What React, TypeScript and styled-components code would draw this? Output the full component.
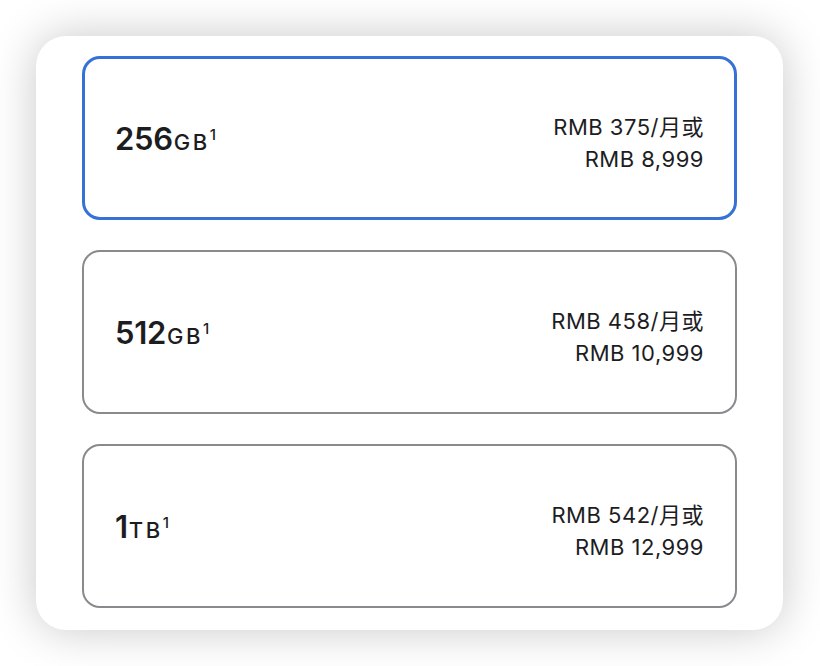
import React, { FC } from 'react';
import styled, { createGlobalStyle } from 'styled-components';

interface StorageOption {
  amount: string;
  unit: string;
  monthly: string;
  total: string;
  selected?: boolean;
}

const options: StorageOption[] = [
  { amount: '256', unit: 'GB', monthly: 'RMB 375/月或', total: 'RMB 8,999', selected: true },
  { amount: '512', unit: 'GB', monthly: 'RMB 458/月或', total: 'RMB 10,999' },
  { amount: '1', unit: 'TB', monthly: 'RMB 542/月或', total: 'RMB 12,999' },
];

const App: FC = () => {
  return (
    <>
      <GlobalStyle />
      <Page>
        <Card>
          {options.map((option) => (
            <OptionBox key={option.amount} $selected={!!option.selected}>
              <Capacity>
                {option.amount}
                <Unit>{option.unit}</Unit>
                <Footnote>1</Footnote>
              </Capacity>
              <Price>
                <PriceLine>{option.monthly}</PriceLine>
                <PriceLine>{option.total}</PriceLine>
              </Price>
            </OptionBox>
          ))}
        </Card>
      </Page>
    </>
  );
};

export default App;

const GlobalStyle = createGlobalStyle`
  html, body {
    margin: 0;
    padding: 0;
    background-color: #ffffff;
  }
  body {
    font-family: 'Inter', 'Noto Sans CJK SC', sans-serif;
    color: #1d1d1f;
    -webkit-font-smoothing: antialiased;
  }
`;

const Page = styled.div`
  width: 820px;
  height: 666px;
  padding: 36px 37px 36px 36px;
  box-sizing: border-box;
  overflow: hidden;
`;

const Card = styled.div`
  width: 747px;
  height: 594px;
  box-sizing: border-box;
  padding: 20px 46px 22px 46px;
  background-color: #ffffff;
  border-radius: 30px;
  box-shadow: 0 0 46px rgba(0, 0, 0, 0.22);
  display: flex;
  flex-direction: column;
  gap: 30px;
`;

const OptionBox = styled.div<{ $selected: boolean }>`
  --bw: ${(p) => (p.$selected ? '3px' : '2px')};
  height: 164px;
  box-sizing: border-box;
  border: var(--bw) solid ${(p) => (p.$selected ? '#3571d6' : '#8a8a8e')};
  border-radius: 18px;
  padding: 0 calc(33px - var(--bw)) 0 calc(33px - var(--bw));
  display: flex;
  align-items: center;
  justify-content: space-between;
`;

const Capacity = styled.div`
  font-size: 31px;
  line-height: 40px;
  font-weight: 600;
  letter-spacing: -0.3px;
  margin-top: 7px;
  white-space: nowrap;
`;

const Unit = styled.span`
  font-size: 22px;
  font-weight: 500;
  letter-spacing: 2.5px;
  margin-left: 1px;
`;

const Footnote = styled.span`
  font-size: 15px;
  font-weight: 500;
  position: relative;
  top: -10px;
`;

const Price = styled.div`
  display: flex;
  flex-direction: column;
  align-items: flex-end;
  margin-top: 10px;
`;

const PriceLine = styled.div`
  font-size: 22px;
  line-height: 32px;
  font-weight: 400;
  letter-spacing: 0.5px;
  white-space: nowrap;
`;
